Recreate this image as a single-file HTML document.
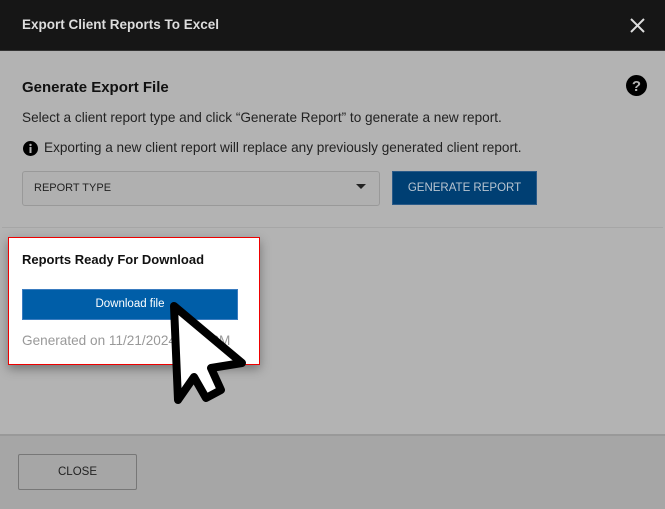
<!DOCTYPE html>
<html><head><style>
body{margin:0;width:665px;height:507px;overflow:hidden;background:#b3b3b3;font-family:"Liberation Sans",sans-serif;position:relative}
.hdr{position:absolute;left:0;top:0;width:665px;height:50px;background:#161616;border-bottom:1px solid #333}
.hdr .t{position:absolute;left:22px;top:17px;color:#ddd;font-size:13.5px;font-weight:bold}
.abs{position:absolute}
</style></head><body>
<div class="hdr"><div class="t">Export Client Reports To Excel</div>
<svg class="abs" style="left:630px;top:18px" width="15" height="15"><path d="M1 1L14 14M14 1L1 14" stroke="#ddd" stroke-width="2"/></svg></div>
<div class="abs" style="left:22px;top:79px;font-size:15px;font-weight:bold;color:#111">Generate Export File</div>
<svg class="abs" style="left:626px;top:75px" width="21" height="21"><circle cx="10.5" cy="10.5" r="10.5" fill="#000"/><text x="10.5" y="16" text-anchor="middle" font-family="Liberation Sans" font-weight="bold" font-size="15" fill="#b3b3b3">?</text></svg>
<div class="abs" style="left:22px;top:110px;font-size:13.6px;color:#222">Select a client report type and click “Generate Report” to generate a new report.</div>
<svg class="abs" style="left:23px;top:141px" width="15" height="15"><circle cx="7.5" cy="7.5" r="7.5" fill="#000"/><rect x="6.5" y="6" width="2" height="6" fill="#b3b3b3"/><circle cx="7.5" cy="4" r="1.2" fill="#b3b3b3"/></svg>
<div class="abs" style="left:44px;top:140px;font-size:13.6px;color:#222">Exporting a new client report will replace any previously generated client report.</div>
<div class="abs" style="left:22px;top:171px;width:356px;height:33px;border:1px solid #999;border-radius:3px;background:#b0b0b0"></div>
<div class="abs" style="left:34px;top:182px;font-size:11px;color:#222">REPORT TYPE</div>
<svg class="abs" style="left:280px;top:184px" width="100" height="10"><path d="M0 0H10L5 5Z" fill="#222" transform="translate(76,0)"/></svg>
<div class="abs" style="left:392px;top:171px;width:143px;height:32px;background:#003f73;border:1px solid #2a5a88;color:#b8c4d0;font-size:11.5px;text-align:center;line-height:32px">GENERATE REPORT</div>
<div class="abs" style="left:2px;top:227px;width:661px;height:1px;background:#a6a6a6"></div>
<div class="abs" style="left:8px;top:237px;width:250px;height:126px;background:#fff;border:1px solid #e00;box-shadow:0 4px 10px rgba(0,0,0,.35)"></div>
<div class="abs" style="left:22px;top:252px;font-size:13px;font-weight:bold;color:#111">Reports Ready For Download</div>
<div class="abs" style="left:22px;top:289px;width:214px;height:29px;background:#005ea8;border:1px solid #3a7cc0;color:#fff;font-size:11.5px;text-align:center;line-height:29px">Download file</div>
<div class="abs" style="left:22px;top:333px;font-size:13.6px;color:#999">Generated on 11/21/2024 3:45 PM</div>
<svg class="abs" style="left:0;top:0" width="665" height="507"><polygon points="174,306 178,400 194,377 206,398 221,390 211,368 242,363" fill="#fff" stroke="#000" stroke-width="8" stroke-linejoin="round"/></svg>
<div class="abs" style="left:0;top:434px;width:665px;height:73px;background:#a6a6a6;border-top:2px solid #999"></div>
<div class="abs" style="left:18px;top:454px;width:117px;height:34px;border:1px solid #777;border-radius:2px;font-size:11.5px;color:#222;text-align:center;line-height:34px">CLOSE</div>
</body></html>
